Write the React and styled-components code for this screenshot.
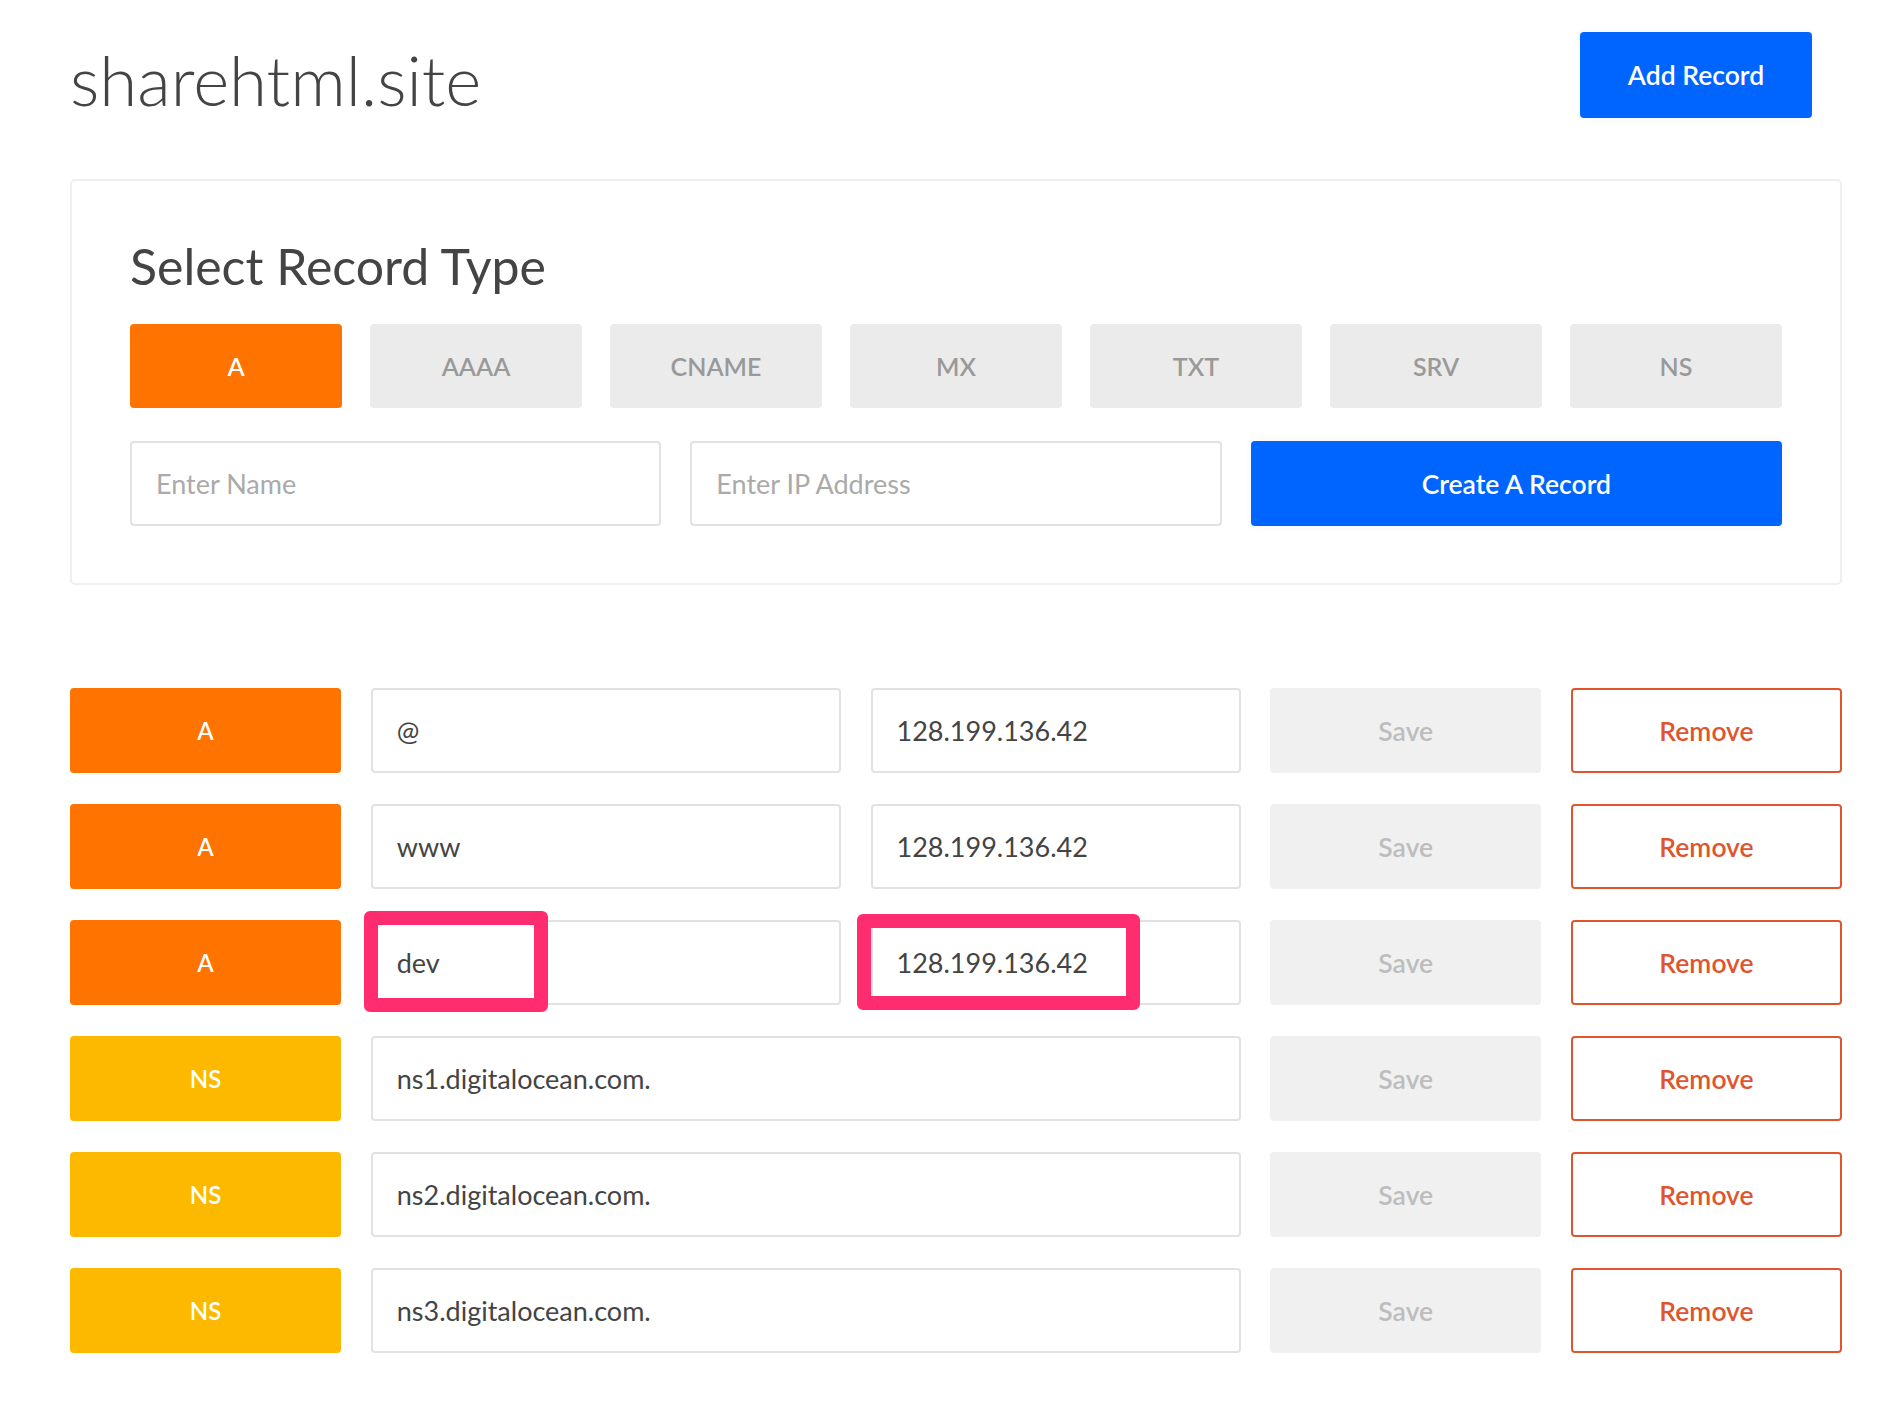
import React from "react"
import styled, { createGlobalStyle } from "styled-components"

const GlobalStyle = createGlobalStyle`
  * { box-sizing: border-box; }
  body {
    margin: 0;
    background: #fff;
    font-family: Lato, "Liberation Sans", sans-serif;
    color: #444;
  }
`

const Page = styled.div`
  width: 1842px;
  padding: 32px 0 60px 70px;
`

const Header = styled.header`
  display: flex;
  justify-content: space-between;
  align-items: flex-start;
  padding-right: 30px;
`

const Title = styled.h1`
  margin: 0;
  padding-top: 13px;
  font-size: 69px;
  line-height: 1;
  font-weight: 300;
  color: #444;
`

const BlueButton = styled.button`
  height: ${(p) => p.$height || 86}px;
  width: ${(p) => (p.$width ? `${p.$width}px` : "100%")};
  border: none;
  border-radius: 4px;
  background: #0064ff;
  color: #fff;
  font-family: inherit;
  font-size: 26.5px;
  font-weight: 600;
  box-shadow: 0 0 10px rgba(0, 0, 0, 0.04);
  cursor: pointer;
`

const Card = styled.section`
  margin-top: 61px;
  border: 2px solid #efefef;
  border-radius: 5px;
  padding: 60px 58px 57px;
`

const Heading = styled.h2`
  margin: 0 0 33px;
  font-size: 50px;
  line-height: 1;
  font-weight: 400;
  color: #444;
`

const TypeGrid = styled.div`
  display: grid;
  grid-template-columns: repeat(7, 1fr);
  column-gap: 28px;
`

const TypeButton = styled.button`
  height: 84px;
  border: none;
  border-radius: 4px;
  background: ${(p) => (p.$active ? "#ff7300" : "#ebebeb")};
  color: ${(p) => (p.$active ? "#fff" : "#999")};
  font-family: inherit;
  font-size: 25px;
  font-weight: 600;
  cursor: pointer;
`

const CreateRow = styled.div`
  margin-top: 33px;
  display: grid;
  grid-template-columns: repeat(3, 1fr);
  column-gap: 29px;
`

const Input = styled.input`
  width: 100%;
  height: 85px;
  border: 2px solid #e2e2e2;
  border-radius: 4px;
  padding: 0 24px;
  font-family: inherit;
  font-size: 27px;
  color: #444;
  background: #fff;
  outline: none;

  &::placeholder {
    color: #aaa;
  }
`

const Records = styled.div`
  margin-top: 103px;
  display: flex;
  flex-direction: column;
  gap: 31px;
`

const Row = styled.div`
  display: grid;
  grid-template-columns: 271px 470px 370px 271px 271px;
  column-gap: 29.75px;
  height: 85px;
`

const Tag = styled.div`
  display: flex;
  align-items: center;
  justify-content: center;
  border-radius: 4px;
  background: ${(p) => (p.$type === "NS" ? "#fdb900" : "#ff7300")};
  color: #fff;
  font-size: 24px;
  font-weight: 600;
`

const Cell = styled.div`
  position: relative;
  grid-column: ${(p) => (p.$wide ? "span 2" : "auto")};
`

const Highlight = styled.div`
  position: absolute;
  left: ${(p) => p.$left}px;
  top: ${(p) => p.$top}px;
  width: ${(p) => p.$w}px;
  height: ${(p) => p.$h}px;
  border: 14px solid #ff2d6f;
  border-radius: 6px;
  pointer-events: none;
`

const SaveButton = styled.button`
  border: none;
  border-radius: 4px;
  background: #f0f0f0;
  color: #bdbdbd;
  font-family: inherit;
  font-size: 26.5px;
  font-weight: 600;
`

const RemoveButton = styled.button`
  border: 2px solid #e0552e;
  border-radius: 4px;
  background: #fff;
  color: #e0552e;
  font-family: inherit;
  font-size: 26.5px;
  font-weight: 600;
  cursor: pointer;
`

const types = ["A", "AAAA", "CNAME", "MX", "TXT", "SRV", "NS"]

const records = [
  { type: "A", name: "@", value: "128.199.136.42" },
  { type: "A", name: "www", value: "128.199.136.42" },
  { type: "A", name: "dev", value: "128.199.136.42", marked: true },
  { type: "NS", value: "ns1.digitalocean.com." },
  { type: "NS", value: "ns2.digitalocean.com." },
  { type: "NS", value: "ns3.digitalocean.com." }
]

function RecordRow({ record }) {
  return (
    <Row>
      <Tag $type={record.type}>{record.type}</Tag>
      {record.type === "NS" ? (
        <Cell $wide>
          <Input defaultValue={record.value} />
        </Cell>
      ) : (
        <>
          <Cell>
            <Input defaultValue={record.name} />
            {record.marked && <Highlight $left={-7} $top={-9} $w={184} $h={101} />}
          </Cell>
          <Cell>
            <Input defaultValue={record.value} />
            {record.marked && <Highlight $left={-14} $top={-6} $w={283} $h={96} />}
          </Cell>
        </>
      )}
      <SaveButton disabled>Save</SaveButton>
      <RemoveButton>Remove</RemoveButton>
    </Row>
  )
}

export default function App() {
  return (
    <Page>
      <GlobalStyle />
      <Header>
        <Title>sharehtml.site</Title>
        <BlueButton $width={232}>Add Record</BlueButton>
      </Header>

      <Card>
        <Heading>Select Record Type</Heading>
        <TypeGrid>
          {types.map((t) => (
            <TypeButton key={t} $active={t === "A"}>
              {t}
            </TypeButton>
          ))}
        </TypeGrid>
        <CreateRow>
          <Input placeholder="Enter Name" />
          <Input placeholder="Enter IP Address" />
          <BlueButton $height={85}>Create A Record</BlueButton>
        </CreateRow>
      </Card>

      <Records>
        {records.map((r, i) => (
          <RecordRow key={i} record={r} />
        ))}
      </Records>
    </Page>
  )
}
